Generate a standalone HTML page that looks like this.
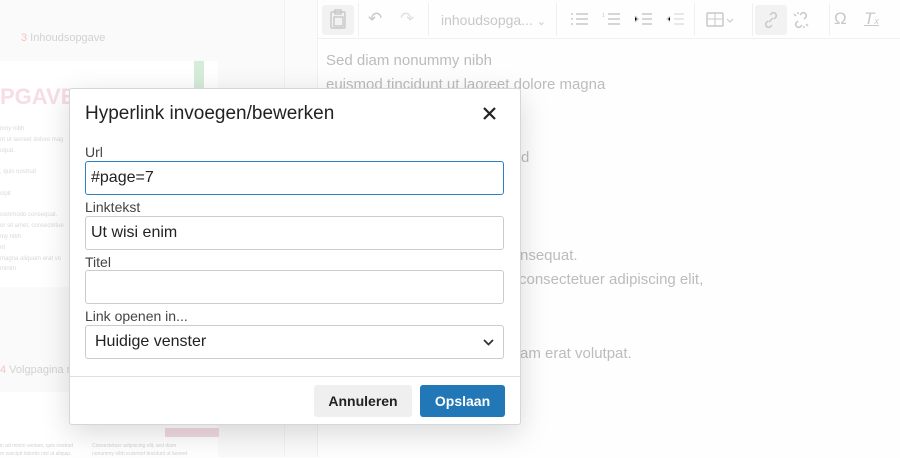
<!DOCTYPE html>
<html><head><meta charset="utf-8"><style>
*{box-sizing:border-box;margin:0;padding:0}
body{width:900px;height:457px;overflow:hidden;background:#fefefe;font-family:"Liberation Sans",sans-serif;position:relative}
.abs{position:absolute}
.left{left:0;top:0;width:285px;height:457px;background:#fafafa;border-right:1px solid #f2f2f2}
.tb{left:318px;top:0;width:582px;height:39px;border-bottom:1px solid #f0f0f0;background:#fefefe}
.ic{position:absolute;top:9px;color:#c8c8c8;font-size:17px}
.sep{position:absolute;top:3px;width:1px;height:33px;background:#f0f0f0}
.ed{color:#bcbcbc;font-size:15px;position:absolute}
.dlg{left:69px;top:88px;width:452px;height:337px;background:#fff;border:1px solid #d6d6d6;border-radius:3px;box-shadow:0 8px 30px rgba(0,0,0,.15)}
.lbl{position:absolute;left:15px;font-size:14px;color:#444}
.inp{position:absolute;left:15px;width:419px;height:34px;border:1px solid #ccc;border-radius:3px;font-size:16px;color:#222;padding:7px 5px}
.btn{position:absolute;top:296px;height:32px;border-radius:3px;font-weight:bold;font-size:14px;text-align:center;line-height:32px}
svg{position:absolute}
</style></head><body>
<div class="abs left">
 <div class="abs" style="left:21px;top:32px;font-size:11px;color:#d2d2d2"><span style="color:#f6c4c4">3</span> Inhoudsopgave</div>
 <div class="abs" style="left:0;top:61px;width:218px;height:226px;background:#fff"></div>
 <div class="abs" style="left:194px;top:61px;width:10px;height:28px;background:#d4ecd8"></div>
 <div class="abs" style="left:0;top:84px;font-size:22px;font-weight:bold;color:#f6dde7">PGAVE</div>
 <div class="abs" style="left:0;top:124px;font-size:6px;line-height:10.8px;color:#d8d8d8">nmy nibh<br>nt ut laoreet dolore mag<br>utpat.<br><br>, quis nostrud<br><br>cipit<br><br>commodo consequat.<br>or sit amet, consectetue<br>my nibh<br>nt<br>magna aliquam erat vo<br>minim</div>
 <div class="abs" style="left:0;top:364px;font-size:11px;color:#d2d2d2"><span style="color:#f6c4c4">4</span> Volgpagina r</div>
 <div class="abs" style="left:0;top:392px;width:218px;height:65px;background:#fff"></div>
 <div class="abs" style="left:165px;top:428px;width:54px;height:9px;background:#f1d9e3"></div>
 <div class="abs" style="left:0;top:442px;font-size:5px;line-height:8px;color:#d2d2d2">in ad minim veniam, quis nostrud<br>m suscipit lobortis nisl ut aliquip.</div>
 <div class="abs" style="left:92px;top:442px;font-size:5px;line-height:8px;color:#d2d2d2">Consectetuer adipiscing elit, sed diam<br>nonummy nibh euismod tincidunt ut laoreet</div>
</div>
<div class="abs" style="left:285px;top:0;width:33px;height:457px;background:#fbfbfb;border-right:1px solid #f0f0f0"></div>
<div class="abs tb">
 <div class="abs" style="left:4px;top:5px;width:32px;height:30px;background:#f2f2f2;border-radius:3px"></div>
 <svg style="left:11px;top:9px" width="18" height="20" viewBox="0 0 18 20" fill="none" stroke="#c8c8c8" stroke-width="1.4"><rect x="2" y="3" width="14" height="16" rx="1"/><rect x="6" y="1" width="6" height="4"/><rect x="5" y="8" width="9" height="9"/></svg>
 <div class="sep" style="left:40px"></div>
 <div class="ic" style="left:50px">&#8630;</div><div class="ic" style="left:82px;color:#e0e0e0">&#8631;</div>
 <div class="sep" style="left:110px"></div>
 <div class="ic" style="left:123px;font-size:14px;top:12px">inhoudsopga... <span style="font-size:11px">&#8964;</span></div>
 <div class="sep" style="left:238px"></div>
 <svg style="left:252px;top:12px" width="18" height="14" stroke="#c8c8c8" stroke-width="1.5"><path d="M6 2h12M6 7h12M6 12h12M1 2h2M1 7h2M1 12h2"/></svg>
 <svg style="left:284px;top:12px" width="18" height="14" stroke="#c8c8c8" stroke-width="1.5"><path d="M6 2h12M6 7h12M6 12h12"/><text x="0" y="5" font-size="5" fill="#c8c8c8" stroke="none">1</text></svg>
 <svg style="left:316px;top:12px" width="18" height="14" stroke="#c8c8c8" stroke-width="1.5"><path d="M8 2h10M8 7h10M8 12h10M1 4l3 3-3 3"/></svg>
 <svg style="left:348px;top:12px" width="18" height="14" stroke="#e0e0e0" stroke-width="1.5"><path d="M8 2h10M8 7h10M8 12h10M4 4L1 7l3 3"/></svg>
 <div class="sep" style="left:376px"></div>
 <svg style="left:388px;top:12px" width="30" height="16" stroke="#c8c8c8" stroke-width="1.5" fill="none"><rect x="1" y="1" width="16" height="13" rx="1"/><path d="M1 7h16M9 1v13M21 7l3 3 3-3" stroke-width="1"/></svg>
 <div class="sep" style="left:434px"></div>
 <div class="abs" style="left:437px;top:5px;width:32px;height:30px;background:#f2f2f2;border-radius:3px"></div>
 <svg style="left:444px;top:11px" width="18" height="18" stroke="#c8c8c8" stroke-width="1.5" fill="none"><path d="M7 11l4-4M8 4l2-2a3 3 0 014 4l-2 2M10 14l-2 2a3 3 0 01-4-4l2-2"/></svg>
 <svg style="left:474px;top:11px" width="18" height="18" stroke="#c8c8c8" stroke-width="1.5" fill="none"><path d="M8 4l2-2a3 3 0 014 4l-2 2M10 14l-2 2a3 3 0 01-4-4l2-2M2 3l2 2M16 15l-2-2M6 1v2M12 17v-2"/></svg>
 <div class="sep" style="left:511px"></div>
 <div class="ic" style="left:516px">&#937;</div><div class="ic" style="left:546px;font-style:italic;text-decoration:underline">T<span style="font-size:9px">x</span></div>
</div>
<div class="ed" style="left:326px;top:52px">Sed diam nonummy nibh</div>
<div class="ed" style="left:326px;top:76px">euismod tincidunt ut laoreet dolore magna</div>
<div class="ed" style="left:521px;top:149px">d</div>
<div class="ed" style="left:520px;top:247px">nsequat.</div>
<div class="ed" style="left:519px;top:271px">consectetuer adipiscing elit,</div>
<div class="ed" style="left:520px;top:345px">am erat volutpat.</div>
<div class="abs dlg">
 <div class="abs" style="left:15px;top:14px;font-size:19px;color:#222">Hyperlink invoegen/bewerken</div>
 <svg style="left:413px;top:18px" width="13" height="13" stroke="#222" stroke-width="2.2"><path d="M1 1l11 11M12 1L1 12"/></svg>
 <div class="lbl" style="top:55px">Url</div>
 <div class="inp" style="top:72px;border-color:#2f80c3">#page=7</div>
 <div class="lbl" style="top:110px">Linktekst</div>
 <div class="inp" style="top:127px">Ut wisi enim</div>
 <div class="lbl" style="top:165px">Titel</div>
 <div class="inp" style="top:181px"></div>
 <div class="lbl" style="top:219px">Link openen in...</div>
 <div class="inp" style="top:236px;padding-left:9px">Huidige venster<svg style="right:9px;top:13px" width="11" height="7" stroke="#333" stroke-width="1.8" fill="none"><path d="M1 1l4.5 4.5L10 1"/></svg></div>
 <div class="abs" style="left:0;top:287px;width:450px;height:1px;background:#e0e0e0"></div>
 <div class="btn" style="left:244px;width:98px;background:#efefef;color:#222">Annuleren</div>
 <div class="btn" style="left:350px;width:85px;background:#2277b7;color:#fff">Opslaan</div>
</div>
</body></html>
